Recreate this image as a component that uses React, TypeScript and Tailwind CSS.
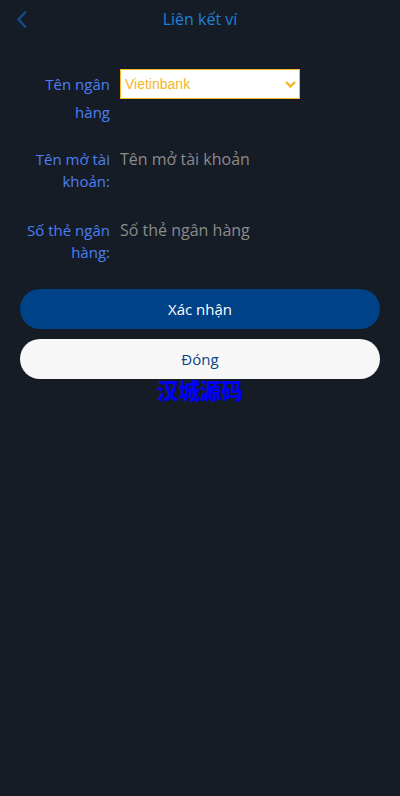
import { useState } from "react";

const font = { fontFamily: '"Open Sans", "Noto Sans", sans-serif' };

const BackIcon = () => (
  <svg width="12" height="19" viewBox="0 0 12 19" fill="none">
    <path d="M10 1.5 L2.5 9.5 L10 17.5" stroke="#0f4e8f" strokeWidth="2.2" />
  </svg>
);

const ChevronDown = () => (
  <svg width="11" height="7" viewBox="0 0 11 7" fill="none">
    <path d="M1 1 L5.5 5.5 L10 1" stroke="#f4b627" strokeWidth="2.4" />
  </svg>
);

export default function App() {
  const [bank, setBank] = useState("Vietinbank");
  const [owner, setOwner] = useState("");
  const [card, setCard] = useState("");

  return (
    <div className="min-h-[796px] w-full bg-[#161c26]" style={font}>
      {/* header */}
      <div className="relative flex h-[38px] items-center justify-center">
        <button className="absolute left-[16px] top-[10px]">
          <BackIcon />
        </button>
        <h1 className="text-[16px] text-[#1c7fd8]">Liên kết ví</h1>
      </div>

      <form className="px-5 pt-[31px]" onSubmit={(e) => e.preventDefault()}>
        {/* bank name */}
        <div className="flex">
          <label className="w-[90px] shrink-0 pt-[1px] text-right text-[15px] leading-[28px] text-[#4b7ff2]">
            Tên ngân hàng
          </label>
          <div className="relative ml-[10px] h-[30px] w-[180px]">
            <select
              value={bank}
              onChange={(e) => setBank(e.target.value)}
              className="h-full w-full appearance-none border border-[#f5b82a] bg-white pl-[4px] text-[14px] text-[#f4b627] outline-none"
              style={{ fontFamily: '"Liberation Sans", Arial, sans-serif' }}
            >
              <option>Vietinbank</option>
              <option>Vietcombank</option>
              <option>Techcombank</option>
              <option>BIDV</option>
            </select>
            <span className="pointer-events-none absolute right-[4px] top-[12px]">
              <ChevronDown />
            </span>
          </div>
        </div>

        {/* account owner */}
        <div className="mt-[22px] flex">
          <label className="w-[90px] shrink-0 text-right text-[15px] leading-[22px] text-[#4b7ff2]">
            Tên mở tài khoản:
          </label>
          <input
            value={owner}
            onChange={(e) => setOwner(e.target.value)}
            placeholder="Tên mở tài khoản"
            className="ml-[10px] h-[22px] flex-1 bg-transparent text-[16px] text-[#d0d0d0] outline-none placeholder:text-[#8a8a8a]"
          />
        </div>

        {/* card number */}
        <div className="mt-[27px] flex">
          <label className="w-[90px] shrink-0 text-right text-[15px] leading-[22px] text-[#4b7ff2]">
            Số thẻ ngân hàng:
          </label>
          <input
            value={card}
            onChange={(e) => setCard(e.target.value)}
            placeholder="Số thẻ ngân hàng"
            className="ml-[10px] h-[22px] flex-1 bg-transparent text-[16px] text-[#d0d0d0] outline-none placeholder:text-[#8a8a8a]"
          />
        </div>

        <button
          type="submit"
          className="mt-[26px] h-[40px] w-full rounded-full bg-[#004288] text-[15px] text-white"
        >
          Xác nhận
        </button>
        <button
          type="button"
          className="mt-[10px] h-[40px] w-full rounded-full bg-[#f7f7f7] text-[15px] text-[#0a4585]"
        >
          Đóng
        </button>
      </form>

      <div className="text-center">
        <a
          href="#"
          className="text-[21.5px] font-black leading-[22px] text-[#0000ff]"
          style={{ fontFamily: '"Noto Sans CJK SC", sans-serif' }}
        >
          汉城源码
        </a>
      </div>
    </div>
  );
}
